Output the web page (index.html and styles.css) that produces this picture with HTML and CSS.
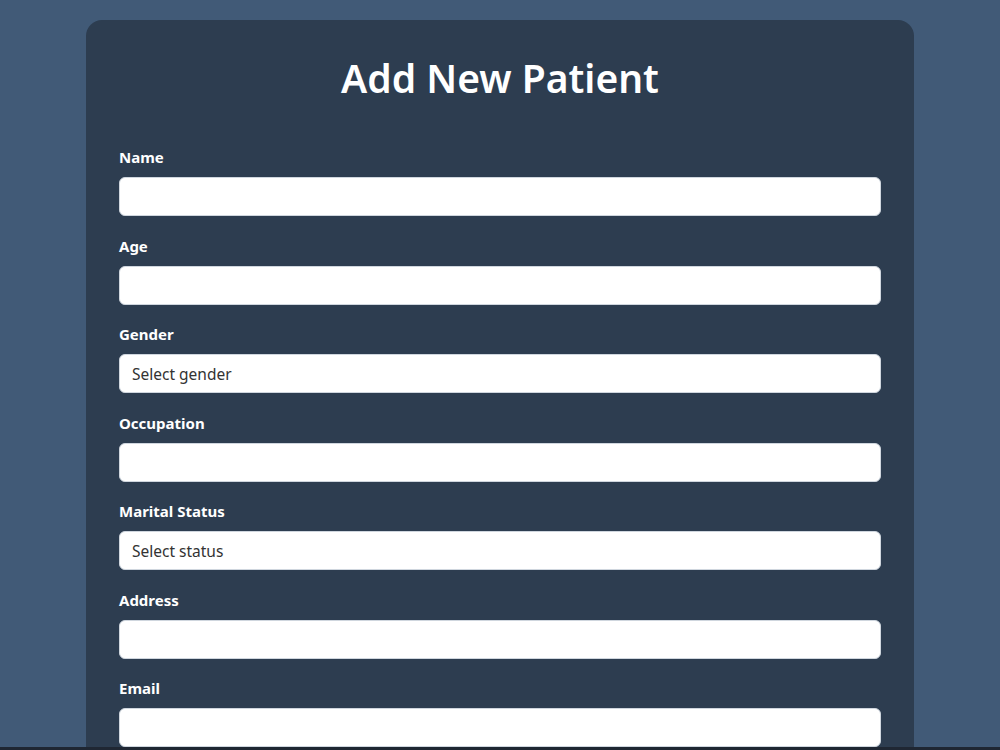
FILE: index.html
```html
<!DOCTYPE html>
<html>
<head>
  <meta charset="utf-8">
  <title>Add New Patient</title>
  <link rel="stylesheet" href="styles.css">
</head>
<body>
  <div class="form-container">
    <h1 class="title">Add New Patient</h1>
    <form class="patient-form">
      <div class="form-group">
        <label for="name">Name</label>
        <input type="text" id="name">
      </div>
      <div class="form-group">
        <label for="age">Age</label>
        <input type="number" id="age">
      </div>
      <div class="form-group">
        <label for="gender">Gender</label>
        <select id="gender">
          <option>Select gender</option>
          <option>Male</option>
          <option>Female</option>
        </select>
      </div>
      <div class="form-group">
        <label for="occupation">Occupation</label>
        <input type="text" id="occupation">
      </div>
      <div class="form-group">
        <label for="marital">Marital Status</label>
        <select id="marital">
          <option>Select status</option>
          <option>Single</option>
          <option>Married</option>
        </select>
      </div>
      <div class="form-group">
        <label for="address">Address</label>
        <input type="text" id="address">
      </div>
      <div class="form-group">
        <label for="email">Email</label>
        <input type="email" id="email">
      </div>
    </form>
  </div>
  <div class="taskbar"></div>
</body>
</html>
```

FILE: styles.css
```css
* {
  box-sizing: border-box;
}
body {
  margin: 0;
  background: #415a77;
  font-family: "Noto Sans", "Open Sans", sans-serif;
  color: #fff;
}
.form-container {
  width: 828px;
  margin: 20px auto 0;
  padding: 24px 33px 40px;
  background: #2d3d50;
  border-radius: 16px;
}
.title {
  margin: 0 0 35px;
  text-align: center;
  font-size: 39px;
  font-weight: 600;
  line-height: 68px;
}
.form-group {
  margin-bottom: 19.5px;
}
.form-group label {
  display: block;
  font-size: 15px;
  font-weight: 700;
  line-height: 21px;
  margin-bottom: 9px;
}
.form-group input,
.form-group select {
  display: block;
  width: 100%;
  height: 39px;
  padding: 0 12px;
  border: 1px solid #cfd6de;
  border-radius: 6px;
  background: #fff;
  font-family: inherit;
  font-size: 15.5px;
  color: #333;
  appearance: none;
  -webkit-appearance: none;
}
.taskbar {
  position: fixed;
  left: 0;
  right: 0;
  bottom: 0;
  height: 3px;
  background: #1f2733;
}
```
